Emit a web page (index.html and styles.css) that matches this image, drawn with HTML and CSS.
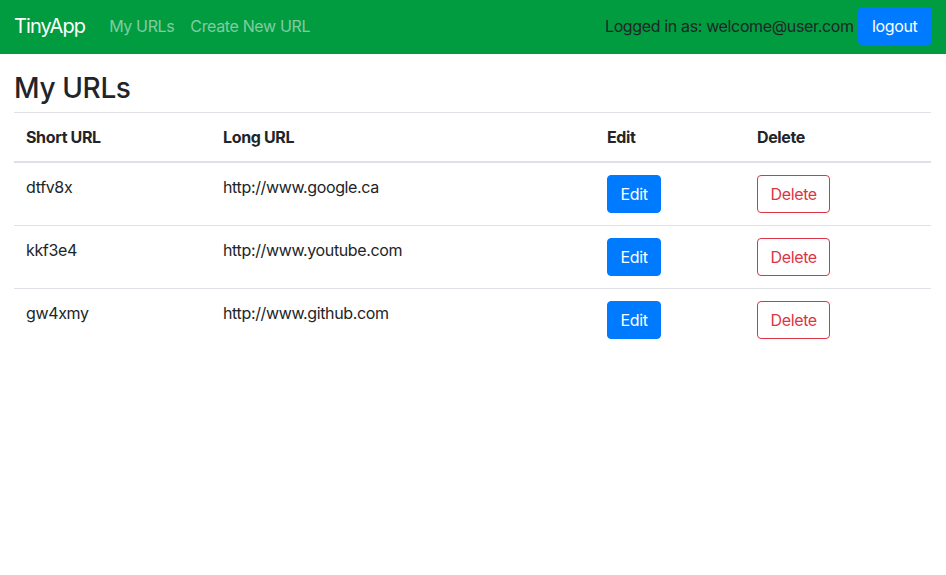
FILE: index.html
```html
<!DOCTYPE html>
<html lang="en">
<head>
<meta charset="utf-8">
<title>TinyApp</title>
<link rel="stylesheet" href="styles.css">
</head>
<body>
<nav class="navbar">
  <a class="brand" href="#">TinyApp</a>
  <ul class="nav-links">
    <li><a href="#">My URLs</a></li>
    <li><a href="#">Create New URL</a></li>
  </ul>
  <div class="nav-right">
    <span class="logged">Logged in as: welcome@user.com</span>
    <button class="btn btn-primary btn-logout">logout</button>
  </div>
</nav>
<main class="main">
  <h3 class="title">My URLs</h3>
  <table class="table">
    <thead>
      <tr>
        <th class="c1">Short URL</th>
        <th class="c2">Long URL</th>
        <th class="c3">Edit</th>
        <th class="c4">Delete</th>
      </tr>
    </thead>
    <tbody>
      <tr>
        <td>dtfv8x</td>
        <td>http://www.google.ca</td>
        <td><button class="btn btn-primary">Edit</button></td>
        <td><button class="btn btn-outline-danger">Delete</button></td>
      </tr>
      <tr>
        <td>kkf3e4</td>
        <td>http://www.youtube.com</td>
        <td><button class="btn btn-primary">Edit</button></td>
        <td><button class="btn btn-outline-danger">Delete</button></td>
      </tr>
      <tr>
        <td>gw4xmy</td>
        <td>http://www.github.com</td>
        <td><button class="btn btn-primary">Edit</button></td>
        <td><button class="btn btn-outline-danger">Delete</button></td>
      </tr>
    </tbody>
  </table>
</main>
</body>
</html>
```

FILE: styles.css
```css
* { box-sizing: border-box; }
html, body { margin: 0; padding: 0; }
body {
  font-family: Inter, "Liberation Sans", Arial, sans-serif;
  font-size: 16px;
  line-height: 1.5;
  letter-spacing: -0.36px;
  color: #212529;
  background: #fff;
}
.navbar {
  display: flex;
  align-items: center;
  height: 54px;
  padding: 0 14px 2px;
  background: #009c3f;
}
.brand {
  font-size: 20px;
  letter-spacing: -0.9px;
  color: #fff;
  text-decoration: none;
  margin-right: 24px;
}
.nav-links {
  display: flex;
  list-style: none;
  margin: 0;
  padding: 0;
  gap: 16px;
}
.nav-links a {
  color: rgba(255,255,255,0.5);
  text-decoration: none;
}
.nav-right {
  margin-left: auto;
  display: flex;
  align-items: center;
  gap: 4px;
}
.logged { color: #212529; }
.btn {
  font-family: inherit;
  font-size: 16px;
  line-height: 24px;
  letter-spacing: inherit;
  padding: 6px 12.5px;
  border: 1px solid transparent;
  border-radius: 4px;
  cursor: pointer;
}
.btn-logout { padding: 6px 13.5px; }
.btn-primary {
  background: #007bff;
  border-color: #007bff;
  color: #fff;
}
.btn-outline-danger {
  background: #fff;
  border-color: #dc3545;
  color: #dc3545;
}
.main {
  padding: 18px 15px 0 14px;
}
.title {
  font-size: 28px;
  font-weight: 500;
  line-height: 1.2;
  margin: 0 0 6px;
}
.table {
  width: 100%;
  border-collapse: collapse;
}
.table th, .table td {
  padding: 12px;
  text-align: left;
  vertical-align: top;
  border-top: 1px solid #dee2e6;
}
.table th { font-weight: 700; }
.table thead th {
  vertical-align: bottom;
  border-bottom: 2px solid #dee2e6;
}
.c1 { width: 197px; }
.c2 { width: 384px; }
.c3 { width: 150px; }
```
